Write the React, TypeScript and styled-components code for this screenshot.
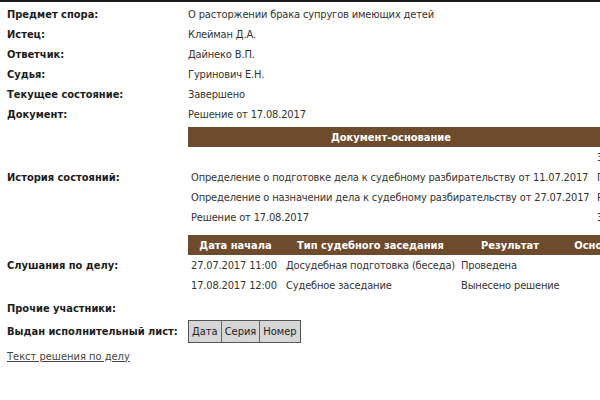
import React from "react";
import styled, { createGlobalStyle } from "styled-components";

const GlobalStyle = createGlobalStyle`
  html, body {
    margin: 0;
    padding: 0;
    background: #ffffff;
    overflow: hidden;
  }
  body {
    font-family: Tahoma, "DejaVu Sans Condensed", "Liberation Sans", sans-serif;
    font-size: 11px;
    color: #333;
  }
`;

const BROWN = "#6e4b2c";

const history = [
  { doc: "", state: "Зарегистрировано" },
  {
    doc: "Определение о подготовке дела к судебному разбирательству от 11.07.2017",
    state: "Подготовка",
  },
  {
    doc: "Определение о назначении дела к судебному разбирательству от 27.07.2017",
    state: "Рассмотрение",
  },
  { doc: "Решение от 17.08.2017", state: "Завершено" },
];

const hearings = [
  {
    date: "27.07.2017 11:00",
    kind: "Досудебная подготовка (беседа)",
    result: "Проведена",
    base: "",
  },
  {
    date: "17.08.2017 12:00",
    kind: "Судебное заседание",
    result: "Вынесено решение",
    base: "",
  },
];

const info: [string, string][] = [
  ["Предмет спора:", "О расторжении брака супругов имеющих детей"],
  ["Истец:", "Клейман Д.А."],
  ["Ответчик:", "Дайнеко В.П."],
  ["Судья:", "Гуринович Е.Н."],
  ["Текущее состояние:", "Завершено"],
  ["Документ:", "Решение от 17.08.2017"],
];

const App = () => (
  <>
    <GlobalStyle />
    <Page>
      {info.map(([label, value]) => (
        <React.Fragment key={label}>
          <Label>{label}</Label>
          <Value>{value}</Value>
        </React.Fragment>
      ))}

      <Label top={3}>История состояний:</Label>
      <TableWrap top={3}>
        <DataTable cols="406px 200px">
          <Head>Документ-основание</Head>
          <Head>Состояние</Head>
          {history.map((h, i) => (
            <React.Fragment key={i}>
              <Td>{h.doc}</Td>
              <Td>{h.state}</Td>
            </React.Fragment>
          ))}
        </DataTable>
      </TableWrap>

      <Label top={8}>Слушания по делу:</Label>
      <TableWrap top={8}>
        <DataTable cols="95px 175px 104px 86px">
          <Head>Дата начала</Head>
          <Head>Тип судебного заседания</Head>
          <Head>Результат</Head>
          <Head>Основание</Head>
          {hearings.map((h) => (
            <React.Fragment key={h.date}>
              <Td>{h.date}</Td>
              <Td>{h.kind}</Td>
              <Td>{h.result}</Td>
              <Td>{h.base}</Td>
            </React.Fragment>
          ))}
        </DataTable>
      </TableWrap>

      <Label top={3}>Прочие участники:</Label>
      <Value top={3} />

      <Label top={1} h={25}>Выдан исполнительный лист:</Label>
      <TableWrap top={1}>
        <GrayTable>
          {["Дата", "Серия", "Номер"].map((t) => (
            <GrayCell key={t}>{t}</GrayCell>
          ))}
        </GrayTable>
      </TableWrap>

      <LinkRow>
        <DocLink href="#">Текст решения по делу</DocLink>
      </LinkRow>
    </Page>
  </>
);

export default App;

const Page = styled.div`
  border-top: 2px solid #1a1a1a;
  padding: 2px 0 0 7px;
  display: grid;
  grid-template-columns: 181px auto;
  align-items: stretch;
  width: 800px;
`;

const Label = styled.div<{ top?: number; h?: number }>`
  display: flex;
  align-items: center;
  min-height: ${({ h }) => h ?? 20}px;
  margin-top: ${({ top }) => top ?? 0}px;
  font-weight: bold;
  color: #1c1c1c;
  white-space: nowrap;
`;

const Value = styled.div<{ top?: number }>`
  display: flex;
  align-items: center;
  min-height: 20px;
  margin-top: ${({ top }) => top ?? 0}px;
  color: #333;
  letter-spacing: -0.15px;
  white-space: nowrap;
`;

const TableWrap = styled.div<{ top?: number }>`
  margin-top: ${({ top }) => top ?? 0}px;
  display: flex;
  align-items: center;
`;

const DataTable = styled.div<{ cols: string }>`
  display: grid;
  grid-template-columns: ${({ cols }) => cols};
  grid-auto-rows: 20px;
`;

const Head = styled.div`
  background: ${BROWN};
  color: #fff;
  font-weight: bold;
  display: flex;
  align-items: center;
  justify-content: center;
  white-space: nowrap;
`;

const Td = styled.div`
  display: flex;
  align-items: center;
  padding-left: 3px;
  white-space: nowrap;
  color: #333;
  letter-spacing: -0.15px;
`;

const GrayTable = styled.div`
  display: flex;
  height: 23px;
  border: 1px solid #555;
  box-sizing: border-box;
`;

const GrayCell = styled.div`
  display: flex;
  align-items: center;
  padding: 0 3px;
  background: #d6d6d6;
  color: #222;
  & + & {
    border-left: 1px solid #666;
  }
`;

const LinkRow = styled.div`
  grid-column: 1 / -1;
  display: flex;
  align-items: center;
  min-height: 20px;
  margin-top: 2px;
`;

const DocLink = styled.a`
  color: #444;
  text-decoration: underline;
`;
